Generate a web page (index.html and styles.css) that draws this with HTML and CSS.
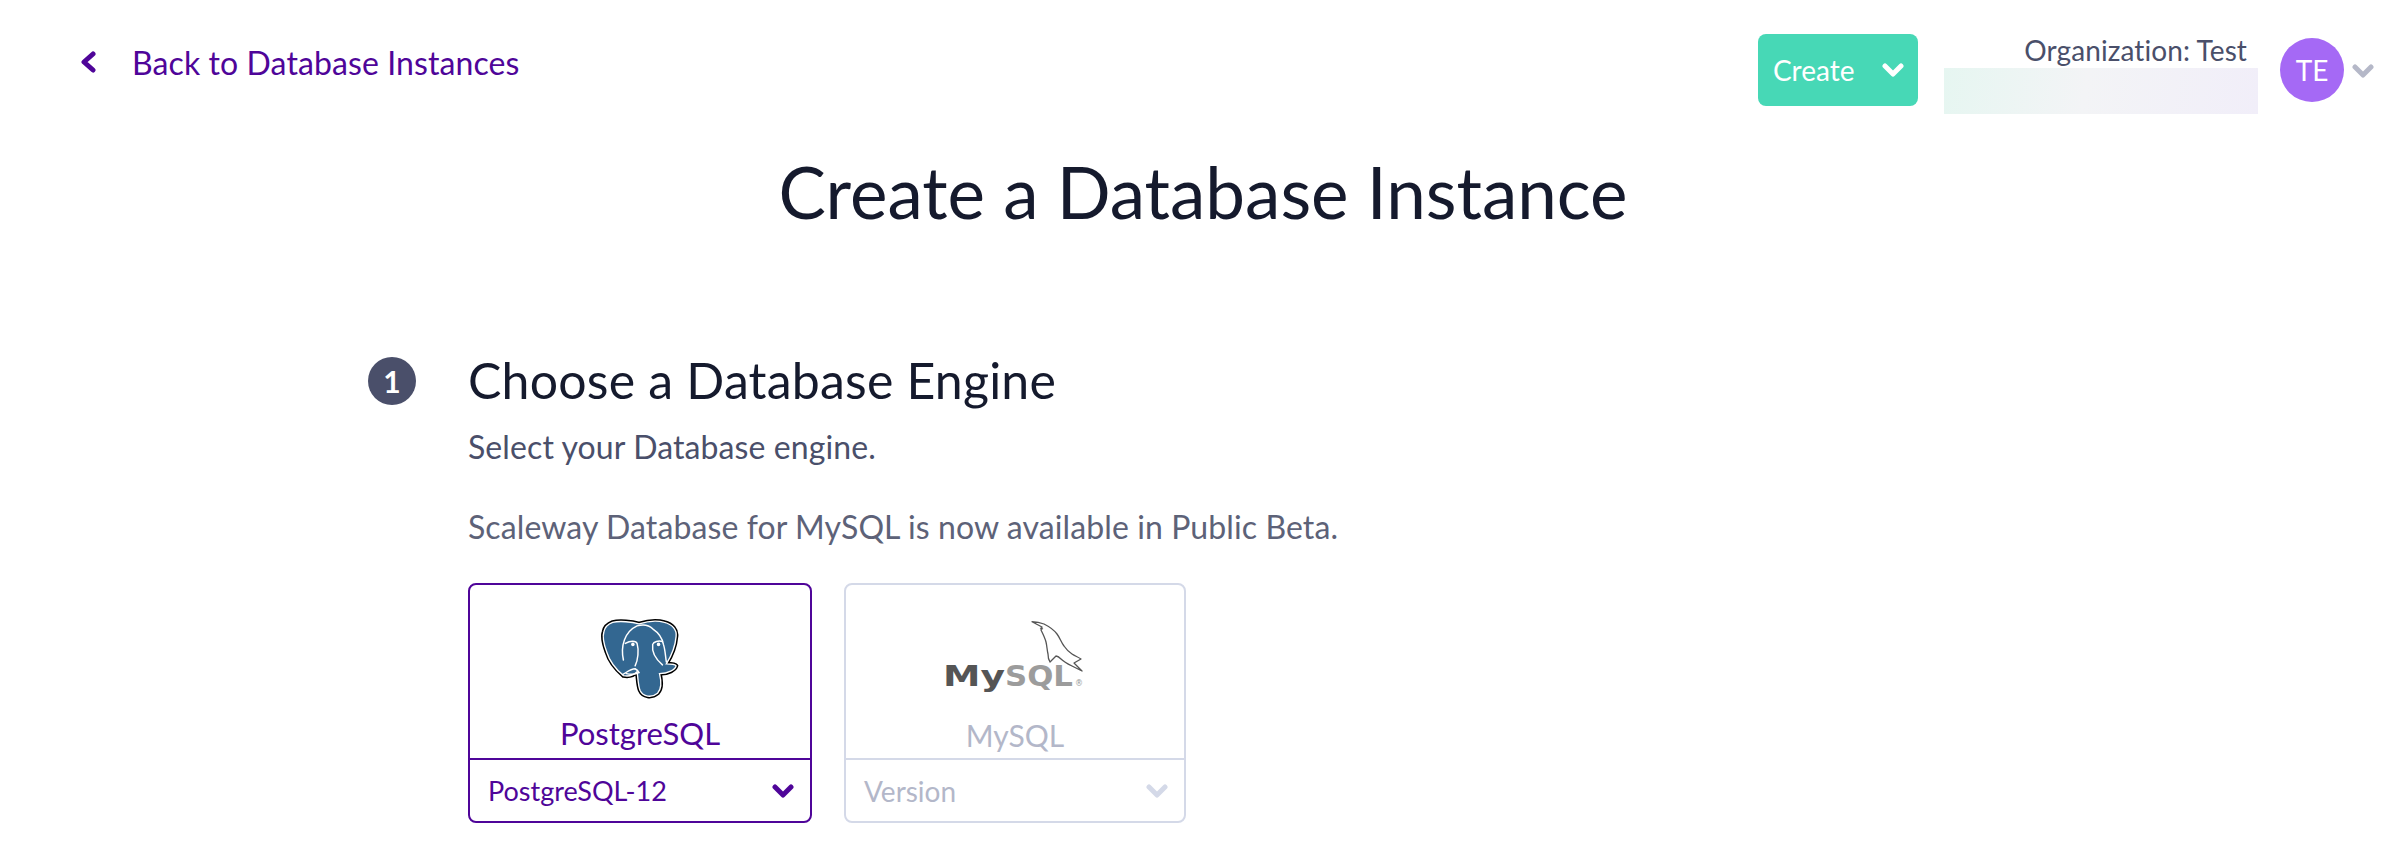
FILE: index.html
```html
<!DOCTYPE html>
<html lang="en">
<head>
  <meta charset="UTF-8">
  <meta name="viewport" content="width=device-width, initial-scale=1.0">
  <title>Create a Database Instance</title>
  <link rel="stylesheet" href="styles.css">
</head>
<body>
  <header class="topbar">
    <a class="back-link" href="#">
      <svg class="back-icon" viewBox="0 0 16 22"><path d="M13 3L4 11l9 8"/></svg>
      <span>Back to Database Instances</span>
    </a>
    <div class="topbar-right">
      <button class="create-btn" type="button">
        <span>Create</span>
        <svg class="chevron" viewBox="0 0 22 14"><path d="M3 3l8 8 8-8"/></svg>
      </button>
      <div class="org">
        <div class="org-name">Organization: Test</div>
        <div class="org-bar"></div>
      </div>
      <div class="avatar">TE</div>
      <svg class="chevron chevron-grey" viewBox="0 0 22 14"><path d="M3 3l8 8 8-8"/></svg>
    </div>
  </header>

  <h1 class="page-title">Create a Database Instance</h1>

  <section class="step">
    <div class="step-number">1</div>
    <div class="step-body">
      <h2 class="step-title">Choose a Database Engine</h2>
      <p class="step-desc">Select your Database engine.</p>
      <p class="step-note">Scaleway Database for MySQL is now available in Public Beta.</p>
      <div class="engines">
        <div class="engine engine-active">
          <div class="engine-top">
            <svg class="logo-pg" viewBox="-3 -3 82 85">
              <path class="pg-outer" d="M10 1.500C17-.5 30 1 37 3c8-2.500 19-3.500 26-1.500 8 2 13 7.500 12 14.500-1 12-5 20-10 28 4 0 9 0 10 2-1 4-8 8-17 8 2 8 2 16-2 20-6 5-15 4-18-3-2-5-2-13-3-19-4 4-9 5-14 4C14 50 7 42 4 32 1 24-1 17 1 11 2 6 6 3 10 1.500z"/>
              <path class="pg-body" d="M10 1.500C17-.5 30 1 37 3c8-2.500 19-3.500 26-1.500 8 2 13 7.500 12 14.500-1 12-5 20-10 28 4 0 9 0 10 2-1 4-8 8-17 8 2 8 2 16-2 20-6 5-15 4-18-3-2-5-2-13-3-19-4 4-9 5-14 4C14 50 7 42 4 32 1 24-1 17 1 11 2 6 6 3 10 1.500z"/>
              <path class="pg-line" d="M21 40C18 26 22 11 35 5c7-2 13 0 16 3 6 4 10 10 11 16 2 6 2 12 3 18"/>
              <path class="pg-line" d="M23 23c5-3 11-3 12 0 2 7 1 17-2 23"/>
              <path class="pg-line" d="M61 21c-4-1-9 0-10 3-1 7 3 15 10 21"/>
              <path class="pg-line" d="M20 55c4-2 8-6 13-6 2 1 3 2 4 4-4 2-9 2-13 1"/>
              <circle class="pg-eye" cx="30.700" cy="24" r="1.800"/>
              <circle class="pg-eye" cx="57" cy="24" r="1.800"/>
            </svg>
            <div class="engine-name">PostgreSQL</div>
          </div>
          <div class="engine-select">
            <span>PostgreSQL-12</span>
            <svg class="chevron" viewBox="0 0 22 14"><path d="M3 3l8 8 8-8"/></svg>
          </div>
        </div>
        <div class="engine engine-disabled">
          <div class="engine-top">
            <svg class="logo-mysql" viewBox="-3 0 146 74">
              <path class="dolphin" d="M87 .7c4 .3 8 1 12 2.300 5 2.500 10 6 13 10 3 4 4 8 7 12 2 3 5 6 8 8 3 2 6 3 9 5l-7 4 8 8-10-5c-4-2-8-4-11-7-3-3-4-3-5-3l-6 6c-2-3-2-5-2-8-1-4-1-8-2-12-1-4-3-8-5-12l1-3z"/>
              <path class="dolphin" d="M95 7l3 1"/>
              <text class="mysql-my" x="-2" y="65" textLength="62" lengthAdjust="spacingAndGlyphs">My</text>
              <text class="mysql-sql" x="60" y="65" textLength="68" lengthAdjust="spacingAndGlyphs">SQL</text>
              <text class="mysql-reg" x="130" y="65">®</text>
            </svg>
            <div class="engine-name">MySQL</div>
          </div>
          <div class="engine-select">
            <span>Version</span>
            <svg class="chevron" viewBox="0 0 22 14"><path d="M3 3l8 8 8-8"/></svg>
          </div>
        </div>
      </div>
    </div>
  </section>
</body>
</html>
```

FILE: styles.css
```css
* {
  box-sizing: border-box;
}

body {
  margin: 0;
  height: 868px;
  overflow: hidden;
  font-family: Lato, "Noto Sans", sans-serif;
  background-color: #fff;
  color: #4a4f6a;
}

.topbar {
  display: flex;
  justify-content: space-between;
  align-items: flex-start;
  padding: 34px 32px 0 80px;
  height: 146px;
}

.back-link {
  display: flex;
  align-items: center;
  gap: 36px;
  height: 56px;
  color: #4f0599;
  font-size: 32px;
  letter-spacing: 0.1px;
  text-decoration: none;
}

.back-icon {
  width: 16px;
  height: 22px;
  fill: none;
  stroke: #4f0599;
  stroke-width: 5;
  stroke-linecap: round;
  stroke-linejoin: round;
}

.topbar-right {
  display: flex;
  align-items: flex-start;
}

.create-btn {
  display: flex;
  align-items: center;
  justify-content: space-between;
  width: 160px;
  height: 72px;
  padding: 0 14px 0 15px;
  border: none;
  border-radius: 8px;
  background-color: #47d8b6;
  color: #fff;
  font-family: inherit;
  font-size: 28px;
}

.chevron {
  width: 22px;
  height: 14px;
  fill: none;
  stroke: #fff;
  stroke-width: 5;
  stroke-linecap: round;
  stroke-linejoin: round;
}

.org {
  width: 314px;
  margin-left: 26px;
}

.org-name {
  height: 34px;
  padding-right: 11px;
  text-align: right;
  font-size: 28px;
  letter-spacing: 0.1px;
  line-height: 32px;
  color: #4a4f6a;
}

.org-bar {
  height: 46px;
  background: linear-gradient(100deg, #e6f6f1 0%, #f3f4f6 45%, #f1eef9 100%);
}

.avatar {
  display: flex;
  align-items: center;
  justify-content: center;
  width: 64px;
  height: 64px;
  margin: 4px 8px 0 22px;
  border-radius: 50%;
  background-color: #a569f5;
  color: #fff;
  font-size: 28px;
}

.chevron-grey {
  margin-top: 30px;
  stroke: #b5b8c8;
}

.page-title {
  margin: 0;
  height: 134px;
  text-align: center;
  font-size: 71px;
  font-weight: 400;
  line-height: 91px;
  color: #151a2d;
}

.step {
  display: flex;
  padding-left: 368px;
  margin-top: 72px;
}

.step-number {
  display: flex;
  align-items: center;
  justify-content: center;
  flex: none;
  width: 48px;
  height: 48px;
  margin-top: 5px;
  border-radius: 50%;
  background-color: #4a4f6a;
  color: #fff;
  font-size: 30px;
  font-weight: 700;
}

.step-body {
  margin-left: 52px;
}

.step-title {
  margin: 0;
  font-size: 50px;
  font-weight: 400;
  letter-spacing: 0.2px;
  line-height: 56px;
  color: #151a2d;
}

.step-desc,
.step-note {
  margin: 0;
  font-size: 32px;
  letter-spacing: 0.1px;
  line-height: 40px;
}

.step-desc {
  margin-top: 19px;
}

.step-note {
  margin-top: 40px;
  color: #5d6278;
}

.engines {
  display: flex;
  gap: 32px;
  margin-top: 36px;
}

.engine {
  display: flex;
  flex-direction: column;
  width: 344px;
  height: 240px;
  border: 2px solid;
  border-radius: 8px;
}

.engine-active {
  border-color: #4f0599;
  color: #4f0599;
}

.engine-disabled {
  width: 342px;
  border-color: #d4d9e8;
  color: #b3b7c9;
}

.engine-top {
  display: flex;
  flex-direction: column;
  align-items: center;
  height: 173px;
  padding-top: 32px;
}

.logo-pg {
  width: 80px;
  height: 85px;
}

.logo-mysql {
  width: 146px;
  height: 74px;
  margin-top: 4px;
}

.engine-name {
  font-size: 32px;
  line-height: 40px;
}

.engine-active .engine-name {
  margin-top: 11px;
  font-size: 31px;
}

.engine-disabled .engine-name {
  margin-top: 20px;
  font-size: 30px;
}

.engine-select {
  display: flex;
  flex: 1;
  align-items: center;
  justify-content: space-between;
  padding: 0 16px 0 18px;
  border-top: 2px solid;
  font-size: 28px;
}

.engine-active .engine-select span {
  font-size: 27px;
}

.engine-active .chevron {
  stroke: #4f0599;
}

.engine-disabled .chevron {
  stroke: #d4d9e8;
}

.engine-disabled .engine-select {
  border-top-color: #d4d9e8;
}

.pg-outer {
  fill: #000;
  stroke: #000;
  stroke-width: 4.5;
}

.pg-body {
  fill: #336791;
  stroke: #fff;
  stroke-width: 1.4;
}

.pg-line {
  fill: none;
  stroke: #fff;
  stroke-width: 1.5;
  stroke-linecap: round;
}

.pg-eye {
  fill: #fff;
}

.dolphin {
  fill: none;
  stroke: #555;
  stroke-width: 1.3;
  stroke-linejoin: round;
}

.mysql-my,
.mysql-sql {
  font-family: "DejaVu Sans", sans-serif;
  font-size: 29px;
  font-weight: 700;
}

.mysql-my {
  fill: #555;
}

.mysql-sql {
  fill: #9c9c9c;
}

.mysql-reg {
  font-family: "DejaVu Sans", sans-serif;
  font-size: 8px;
  fill: #999;
}
```
